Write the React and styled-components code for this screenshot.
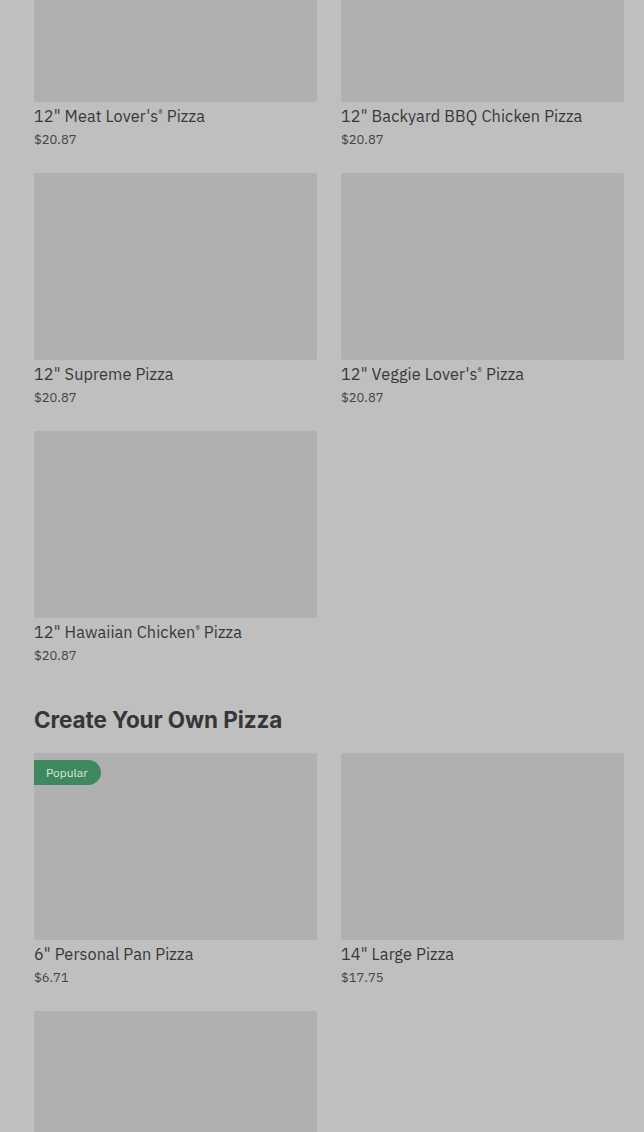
import React from "react";
import styled, { createGlobalStyle } from "styled-components";

const GlobalStyle = createGlobalStyle`
  html, body {
    margin: 0;
    padding: 0;
    background: #bfbfbf;
    overflow: hidden;
  }
  * { box-sizing: border-box; }
`;

const Page = styled.div`
  padding: 0 20px 0 34px;
  margin-top: -85px;
  font-family: "IBM Plex Sans", "Roboto", "Liberation Sans", sans-serif;
  color: #3a3a3a;
`;

const Section = styled.section``;

const SectionTitle = styled.h2`
  margin: 40px 0 20px;
  font-family: "Inter", "Lato", sans-serif;
  font-weight: 700;
  font-size: 22.5px;
  line-height: 26px;
  letter-spacing: -0.1px;
  color: #363636;
`;

const Grid = styled.div`
  display: grid;
  grid-template-columns: 283px 283px;
  column-gap: 24px;
  row-gap: 22px;
`;

const Card = styled.div`
  position: relative;
`;

const Thumb = styled.div`
  height: 187px;
  background: #b0b0b0;
  border-radius: 2px;
`;

const Badge = styled.span`
  position: absolute;
  top: 7px;
  left: 0;
  height: 25px;
  padding: 0 13px 0 12px;
  display: flex;
  align-items: center;
  background: #3e8a5e;
  color: #d9e8de;
  font-size: 12px;
  border-radius: 0 13px 13px 0;
`;

const Name = styled.div`
  margin-top: 2px;
  font-size: 16.3px;
  line-height: 24px;
  color: #383838;
  letter-spacing: 0.1px;
  sup {
    font-size: 9px;
    line-height: 0;
    vertical-align: 5px;
  }
`;

const Price = styled.div`
  font-size: 13px;
  line-height: 22px;
  padding-top: 1px;
  color: #444;
`;

const Reg = () => <sup>®</sup>;

const specialty = [
  { name: <>12" Meat Lover's<Reg /> Pizza</>, price: "$20.87" },
  { name: <>12" Backyard BBQ Chicken Pizza</>, price: "$20.87" },
  { name: <>12" Supreme Pizza</>, price: "$20.87" },
  { name: <>12" Veggie Lover's<Reg /> Pizza</>, price: "$20.87" },
  { name: <>12" Hawaiian Chicken<Reg /> Pizza</>, price: "$20.87" },
];

const own = [
  { name: <>6" Personal Pan Pizza</>, price: "$6.71", popular: true },
  { name: <>14" Large Pizza</>, price: "$17.75" },
  { name: null, price: "" },
];

const PizzaCard = ({ item }) => (
  <Card>
    <Thumb />
    {item.popular && <Badge>Popular</Badge>}
    {item.name && <Name>{item.name}</Name>}
    {item.price && <Price>{item.price}</Price>}
  </Card>
);

export default function App() {
  return (
    <Page>
      <GlobalStyle />
      <Section>
        <Grid>
          {specialty.map((p, i) => <PizzaCard key={i} item={p} />)}
        </Grid>
      </Section>
      <Section>
        <SectionTitle>Create Your Own Pizza</SectionTitle>
        <Grid>
          {own.map((p, i) => <PizzaCard key={i} item={p} />)}
        </Grid>
      </Section>
    </Page>
  );
}
